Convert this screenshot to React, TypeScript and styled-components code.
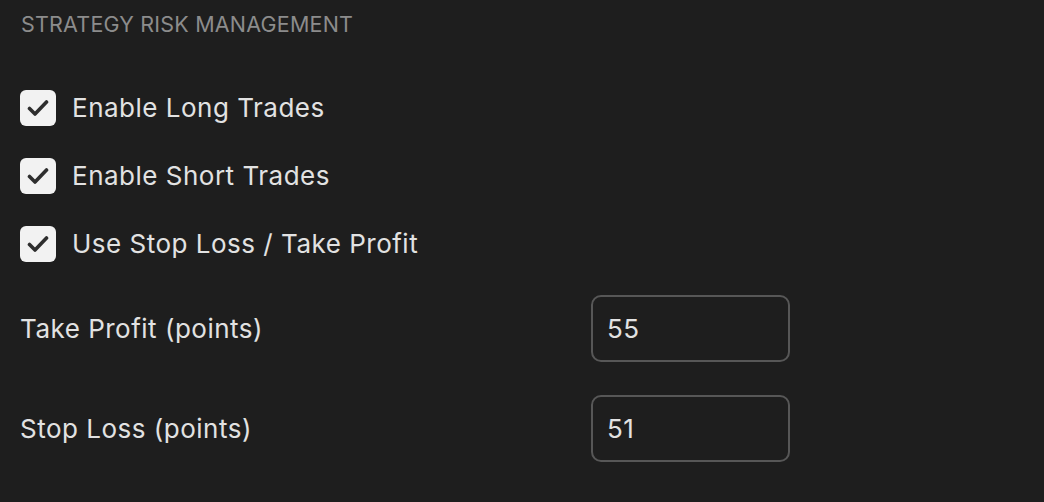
import React from "react";
import styled, { createGlobalStyle } from "styled-components";

const Global = createGlobalStyle`
  html, body { margin: 0; padding: 0; background: #1e1e1e; }
  body { font-family: Inter, "Noto Sans", sans-serif; -webkit-font-smoothing: antialiased; }
`;

const Panel = styled.div`
  width: 1044px;
  height: 502px;
  box-sizing: border-box;
  background: #1e1e1e;
  padding: 11px 0 0 20px;
  display: flex;
  flex-direction: column;
`;

const Heading = styled.div`
  font-size: 21.5px;
  line-height: 26px;
  color: #8c8c8c;
  letter-spacing: 0.2px;
  text-transform: uppercase;
  margin-left: 1px;
`;

const CheckList = styled.div`
  display: flex;
  flex-direction: column;
  gap: 32px;
  margin-top: 53px;
`;

const CheckRow = styled.label`
  display: flex;
  align-items: center;
  gap: 16px;
  height: 36px;
  cursor: pointer;
`;

const Box = styled.span`
  width: 36px;
  height: 36px;
  border-radius: 6px;
  background: #f2f2f2;
  display: flex;
  align-items: center;
  justify-content: center;
  flex-shrink: 0;
`;

const Label = styled.span`
  font-size: 26px;
  color: #e2e2e2;
  letter-spacing: 0.5px;
  line-height: 36px;
`;

const Fields = styled.div`
  display: flex;
  flex-direction: column;
  gap: 33px;
  margin-top: 33px;
`;

const FieldRow = styled.div`
  display: flex;
  align-items: center;
  height: 67px;
`;

const FieldLabel = styled.span`
  width: 571px;
  font-size: 26px;
  color: #e2e2e2;
  letter-spacing: 0.5px;
`;

const Input = styled.input`
  width: 199px;
  height: 67px;
  box-sizing: border-box;
  border: 2px solid #575757;
  border-radius: 10px;
  background: transparent;
  color: #e2e2e2;
  font-family: Inter, "Noto Sans", sans-serif;
  font-size: 26px;
  letter-spacing: 0.5px;
  padding: 0 0 0 14px;
  outline: none;
`;

const Check = () => (
  <svg width="22" height="18" viewBox="0 0 22 18" fill="none">
    <path d="M2.5 9.5 L8 15 L19.5 3" stroke="#2e2e2e" strokeWidth="3.6" strokeLinecap="round" strokeLinejoin="round" />
  </svg>
);

const checks = ["Enable Long Trades", "Enable Short Trades", "Use Stop Loss / Take Profit"];
const fields = [
  { label: "Take Profit (points)", value: "55" },
  { label: "Stop Loss (points)", value: "51" },
];

export default function App() {
  return (
    <>
      <Global />
      <Panel>
        <Heading>Strategy Risk Management</Heading>
        <CheckList>
          {checks.map((c) => (
            <CheckRow key={c}>
              <Box><Check /></Box>
              <Label>{c}</Label>
            </CheckRow>
          ))}
        </CheckList>
        <Fields>
          {fields.map((f) => (
            <FieldRow key={f.label}>
              <FieldLabel>{f.label}</FieldLabel>
              <Input defaultValue={f.value} />
            </FieldRow>
          ))}
        </Fields>
      </Panel>
    </>
  );
}
